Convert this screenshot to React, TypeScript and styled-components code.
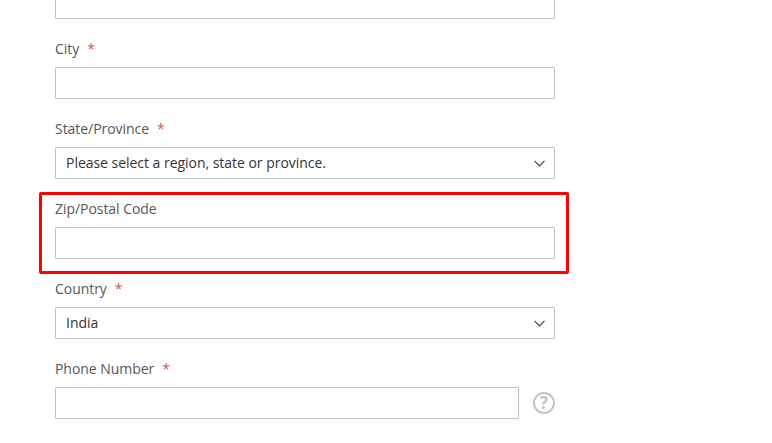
import React from 'react';
import styled, { createGlobalStyle } from 'styled-components';

const GlobalStyle = createGlobalStyle`
    html, body {
        margin: 0;
        padding: 0;
        height: 100%;
        background: #fff;
        overflow: hidden;
    }
    body {
        font-family: "Open Sans", "Noto Sans", sans-serif;
        font-size: 14px;
        color: #333;
    }
`;

const Page = styled.div`
    width: 772px;
    height: 443px;
    overflow: hidden;
    padding-left: 55px;
    box-sizing: border-box;
`;

const Form = styled.form`
    width: 500px;
    margin-top: -13px;
    display: flex;
    flex-direction: column;
`;

const Field = styled.div`
    position: relative;
    display: flex;
    flex-direction: column;
`;

const Label = styled.label`
    display: block;
    height: 20px;
    line-height: 20px;
    margin: 20px 0 8px;
    font-size: 14px;
    letter-spacing: -0.05px;
    color: #575757;
    white-space: nowrap;
`;

const Required = styled.span`
    color: #e8504c;
    font-size: 14px;
    margin-left: 8px;
`;

const Input = styled.input`
    display: block;
    width: 100%;
    height: 32px;
    box-sizing: border-box;
    border: 1px solid #c2c2c2;
    border-radius: 1px;
    background: #fff;
    padding: 0 10px;
    font-family: inherit;
    font-size: 14px;
    outline: none;
`;

const SelectWrap = styled.div`
    position: relative;
    height: 32px;
`;

const Select = styled.select`
    display: block;
    width: 100%;
    height: 32px;
    box-sizing: border-box;
    border: 1px solid #c2c2c2;
    border-radius: 1px;
    background: #fff;
    padding: 0 10px 2px;
    font-family: inherit;
    font-size: 14px;
    letter-spacing: -0.03px;
    color: #333;
    appearance: none;
    outline: none;
`;

const Chevron = styled.svg`
    position: absolute;
    right: 10px;
    top: 13px;
    width: 11px;
    height: 7px;
    pointer-events: none;
`;

const InputRow = styled.div`
    display: flex;
    align-items: center;
    gap: 14px;
`;

const HelpBadge = styled.span`
    flex: none;
    width: 22px;
    height: 22px;
    box-sizing: border-box;
    border: 2px solid #c4c4c4;
    border-radius: 50%;
    display: flex;
    align-items: center;
    justify-content: center;
    font-size: 17px;
    line-height: 18px;
    font-weight: 700;
    color: #c4c4c4;
`;

const Highlight = styled.div`
    position: absolute;
    left: -16px;
    right: -14px;
    top: 13px;
    height: 82px;
    box-sizing: border-box;
    border: 3px solid #f00;
    border-radius: 2px;
    pointer-events: none;
`;

const SelectArrow = () => (
    <Chevron viewBox="0 0 11 7" fill="none">
        <path d="M0.5 0.8 L5.5 5.8 L10.5 0.8" stroke="#444" strokeWidth="1.2" />
    </Chevron>
);

const App: React.FC = () => {
    return (
        <Page>
            <GlobalStyle />
            <Form>
                <Input type="text" aria-label="Street address" />
                <Field>
                    <Label>City<Required>*</Required></Label>
                    <Input type="text" />
                </Field>
                <Field>
                    <Label>State/Province<Required>*</Required></Label>
                    <SelectWrap>
                        <Select defaultValue="none">
                            <option value="none">Please select a region, state or province.</option>
                        </Select>
                        <SelectArrow />
                    </SelectWrap>
                </Field>
                <Field>
                    <Highlight />
                    <Label>Zip/Postal Code</Label>
                    <Input type="text" />
                </Field>
                <Field>
                    <Label>Country<Required>*</Required></Label>
                    <SelectWrap>
                        <Select defaultValue="in">
                            <option value="in">India</option>
                        </Select>
                        <SelectArrow />
                    </SelectWrap>
                </Field>
                <Field>
                    <Label>Phone Number<Required>*</Required></Label>
                    <InputRow>
                        <Input type="text" />
                        <HelpBadge>?</HelpBadge>
                    </InputRow>
                </Field>
            </Form>
        </Page>
    );
};

export default App;
